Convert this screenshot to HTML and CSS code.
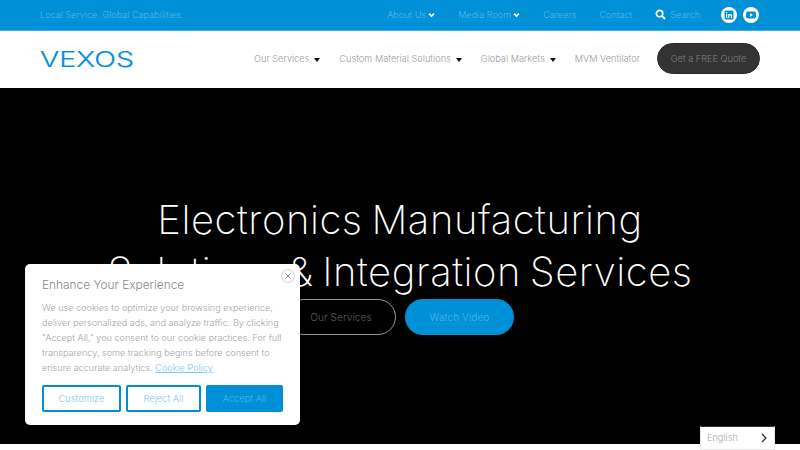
FILE: index.html
```html
<!DOCTYPE html>
<html lang="en">
<head>
<meta charset="utf-8">
<title>Vexos</title>
<link rel="stylesheet" href="styles.css">
</head>
<body>
<div class="topbar">
  <span class="tagline">Local Service. Global Capabilities.</span>
  <nav class="topnav">
    <a class="toplink">About Us <svg class="chev" viewBox="0 0 10 8"><path d="M1.5 2 5 5.5 8.500 2" fill="none" stroke="#fff" stroke-width="2.400"/></svg></a>
    <a class="toplink">Media Room <svg class="chev" viewBox="0 0 10 8"><path d="M1.5 2 5 5.5 8.500 2" fill="none" stroke="#fff" stroke-width="2.400"/></svg></a>
    <a class="toplink">Careers</a>
    <a class="toplink">Contact</a>
    <a class="toplink search"><svg class="mag" viewBox="0 0 12 12"><circle cx="5" cy="5" r="3.500" fill="none" stroke="#fff" stroke-width="1.800"/><path d="M7.500 7.500 11 11" stroke="#fff" stroke-width="2.200"/></svg> Search</a>
    <span class="socials">
      <svg class="social" viewBox="0 0 16 16"><circle cx="8" cy="8" r="8" fill="#fff"/><rect x="3.500" y="3.500" width="9" height="9" rx="1.500" fill="#0090d7"/><path d="M5 7h1.200v4H5zM5 5h1.200v1.200H5zM7.200 7h1.100v.6c.7-1 2.700-.9 2.700 1V11H9.900V9c0-1-1.600-1-1.600 0v2H7.200z" fill="#fff"/></svg>
      <svg class="social" viewBox="0 0 16 16"><circle cx="8" cy="8" r="8" fill="#fff"/><rect x="3" y="4.500" width="10" height="7" rx="2" fill="#0090d7"/><path d="M7 6.300 10 8 7 9.700z" fill="#fff"/></svg>
    </span>
  </nav>
</div>
<header class="header">
  <svg class="logo" viewBox="0 0 94 26" role="img"><text x="0" y="20.500" textLength="94" lengthAdjust="spacingAndGlyphs" class="logotext">VEXOS</text></svg>
  <nav class="mainnav">
    <a class="mainlink">Our Services <i class="caret"></i></a>
    <a class="mainlink">Custom Material Solutions <i class="caret"></i></a>
    <a class="mainlink">Global Markets <i class="caret"></i></a>
    <a class="mainlink">MVM Ventilator</a>
    <a class="quote">Get a FREE Quote</a>
  </nav>
</header>
<main class="hero">
  <h1 class="title">Electronics Manufacturing<br>Solutions &amp; Integration Services</h1>
  <div class="actions">
    <a class="btn outline">Our Services</a>
    <a class="btn solid">Watch Video</a>
  </div>
</main>
<aside class="cookie">
  <button class="close" aria-label="Close"><svg viewBox="0 0 14 14"><circle cx="7" cy="7" r="6.300" fill="#fff" stroke="#c9d3e0"/><path d="M4.500 4.500l5 5m0-5l-5 5" stroke="#7d8a99" stroke-width="1"/></svg></button>
  <h2 class="cookie-title">Enhance Your Experience</h2>
  <p class="cookie-text">We use cookies to optimize your browsing experience, deliver personalized ads, and analyze traffic. By clicking "Accept All," you consent to our cookie practices. For full transparency, some tracking begins before consent to ensure accurate analytics. <a class="policy">Cookie Policy</a></p>
  <div class="cookie-actions">
    <a class="cbtn customize">Customize</a>
    <a class="cbtn reject">Reject All</a>
    <a class="cbtn accept">Accept All</a>
  </div>
</aside>
<div class="lang"><span>English</span><svg class="lang-arrow" viewBox="0 0 8 12"><path d="M2 2l4 4-4 4" fill="none" stroke="#333" stroke-width="1.300"/></svg></div>
</body>
</html>
```
FILE: styles.css
```css
* { box-sizing: border-box; }
html, body { margin: 0; height: 450px; overflow: hidden; }
body { font-family: Inter, "Noto Sans", sans-serif; font-weight: 300; background: #fff; }
.topbar { height: 31px; background: #0090d7; border-bottom: 1px solid #3fb0ea; display: flex; align-items: center; padding: 0 41px 1px 40px; font-size: 9.100px; color: #5ab9ea; }
.tagline { letter-spacing: 0; }
.topnav { margin-left: auto; display: flex; align-items: center; gap: 23px; }
.toplink { display: flex; align-items: center; gap: 2px; }
.chev { width: 7px; height: 6px; }
.search { gap: 4px; }
.mag { width: 11px; height: 11px; }
.socials { display: flex; gap: 6px; margin-left: -2px; }
.social { width: 16px; height: 16px; display: block; }
.header { height: 57px; display: flex; align-items: center; padding: 0 40px 2px; background: #fff; }
.logo { width: 94px; height: 26px; display: block; }
.logotext { font: 300 21px Inter, sans-serif; fill: #0090d7; stroke: #0090d7; stroke-width: .2px; }
.mainnav { margin-left: auto; display: flex; align-items: center; gap: 19px; font-size: 9.200px; color: #9a9a9a; }
.mainlink { display: flex; align-items: center; gap: 5px; }
.caret { width: 0; height: 0; border: 3px solid transparent; border-top: 4px solid #111; border-bottom: 0; margin-top: 2px; }
.quote { height: 31px; width: 103px; margin-left: -2px; border-radius: 16px; background: #333; color: #7f7f7f; display: flex; align-items: center; justify-content: center; border: 1px solid #2b2b2b; }
.hero { height: 356px; background: #000; display: flex; flex-direction: column; align-items: center; justify-content: center; padding-bottom: 3px; }
.title { margin: 0 0 1px; color: #fff; font-weight: 200; font-size: 40px; line-height: 52px; text-align: center; letter-spacing: .55px; word-spacing: -3px; }
.actions { display: flex; gap: 9px; }
.btn { height: 36px; border-radius: 18px; display: flex; align-items: center; justify-content: center; font-size: 10.200px; }
.outline { width: 110px; border: 1px solid #999; color: #5c5c5c; }
.solid { width: 109px; background: #0090d7; color: #4db5ea; }
.cookie { position: fixed; left: 25px; top: 264px; width: 275px; height: 161px; background: #fff; border-radius: 5px; padding: 13px 17px; }
.close { position: absolute; right: 5px; top: 5px; width: 14px; height: 14px; padding: 0; border: 0; background: none; }
.close svg { display: block; }
.cookie-title { margin: 0; font-size: 11.900px; line-height: 16px; font-weight: 300; color: #888; }
.cookie-text { margin: 7px 0 0; font-size: 9.100px; line-height: 15px; color: #a5a5a5; }
.policy { color: #7cc8ee; text-decoration: underline; }
.cookie-actions { display: flex; gap: 5px; margin-top: 10px; }
.cbtn { height: 27px; display: flex; align-items: center; justify-content: center; font-size: 9.300px; border-radius: 2px; }
.customize { width: 79px; border: 2px solid #0090d7; color: #7cc8ee; }
.reject { width: 75px; border: 2px solid #0090d7; color: #7cc8ee; }
.accept { width: 77px; background: #0090d7; color: #4db5ea; }
.lang { position: fixed; left: 700px; top: 426px; width: 75px; height: 24px; background: #fff; border: 1px solid #e8e8e8; border-top-color: #333; display: flex; align-items: center; justify-content: space-between; padding: 0 6px 1px; font-size: 9.200px; color: #aaa; }
.lang-arrow { width: 8px; height: 12px; }
```
